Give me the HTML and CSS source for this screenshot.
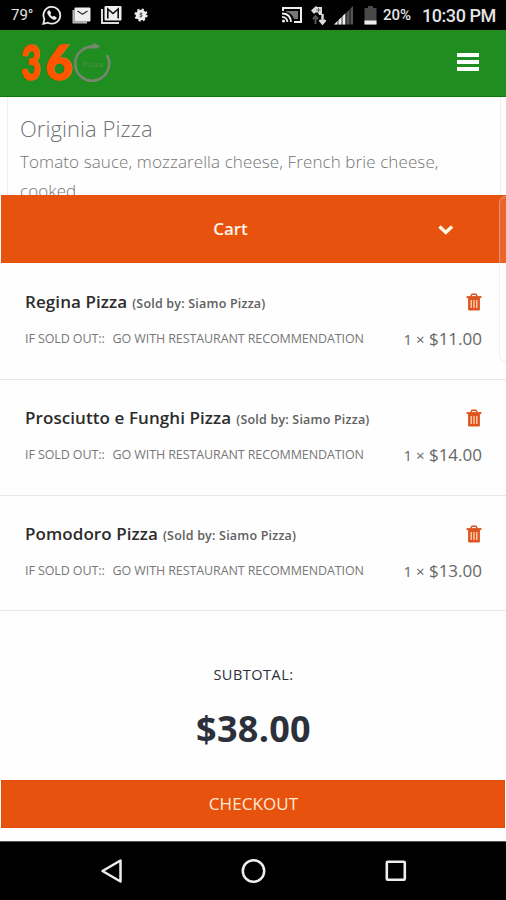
FILE: index.html
```html
<!DOCTYPE html>
<html lang="en">
<head>
<meta charset="utf-8">
<title>360 Pizza</title>
<link rel="stylesheet" href="styles.css">
</head>
<body>
<svg width="0" height="0" class="defs" aria-hidden="true">
  <symbol id="trash" viewBox="0 0 16 18">
    <path d="M4.8 3.4 6 1.2h4l1.2 2.2" fill="none" stroke="#de541c" stroke-width="1.4"/>
    <path d="M.6 3.1h14.8v2H.6z" fill="#de541c"/>
    <path d="M2.1 5h11.8v11.2q0 1.2-1.2 1.2H3.3q-1.2 0-1.2-1.2z" fill="#de541c"/>
    <path d="M5.2 7v8M8 7v8M10.8 7v8" stroke="#ffd9bd" stroke-width="1.3"/>
  </symbol>
</svg>
<div class="phone">
  <div class="status">
    <span class="temp">79°</span>
    <svg class="i-wa" width="20" height="20" viewBox="0 0 20 20"><path d="M2.4 14.1A8.4 8.4 0 1 1 6 17.7L1.3 18.8z" fill="none" stroke="#eee" stroke-width="1.8"/><path d="M5.600 6.200 7.300 5l2 3-1 1.300q.8 1.600 2.400 2.400l1.300-1 2.900 2-1.200 1.700q-1.200.8-3.200-.2Q6.600 12 5.400 8.800q-.4-1.600.2-2.600z" fill="#eee"/></svg>
    <svg class="i-mail" width="20" height="18" viewBox="0 0 20 18"><path d="M1.500 4v12.500H15" fill="none" stroke="#bbb" stroke-width="2"/><rect x="2.500" y="1.500" width="16" height="14" rx="1" fill="#eee"/><path d="m5.500 5 5 3.200 5-3.200" fill="none" stroke="#333" stroke-width="1.300"/></svg>
    <svg class="i-gmail" width="23" height="20" viewBox="0 0 23 20"><path d="M2 4v14h17" fill="none" stroke="#ddd" stroke-width="2"/><rect x="4.500" y="1" width="17" height="14.500" rx="1" fill="#eee"/><path d="M7.800 13.500V4l5.200 4.500L18.200 4v9.500" fill="none" stroke="#111" stroke-width="1.600"/></svg>
    <svg class="i-badge" width="14" height="14" viewBox="0 0 14 14"><circle cx="7" cy="7" r="5.300" fill="#eee"/><circle cx="7" cy="7" r="5.600" fill="none" stroke="#eee" stroke-width="2" stroke-dasharray="2.200"/><path d="M8.400 5.500H6.700q-.9 0-.9.750t.9.750h.6q.9 0 .9.750t-.9.750H5.600M7 4.300v5.400" fill="none" stroke="#444" stroke-width=".8"/></svg>
    <svg class="i-cast" width="22" height="18" viewBox="0 0 22 18"><path d="M2 5V2h18v14h-7" fill="none" stroke="#eee" stroke-width="2"/><path d="M5 5h12v8h-4Q11 7 5 6z" fill="#777"/><path d="M1 7.500q8.500 0 9 8.500M1 10.800q5 .3 5.500 5.200" fill="none" stroke="#eee" stroke-width="1.800"/><circle cx="2.500" cy="15" r="1.500" fill="#eee"/></svg>
    <svg class="i-data" width="17" height="20" viewBox="0 0 17 20"><path d="m1 5.500 5.500-5V2H12v8H9l-1-2.500H5.500L4 9z" fill="#ddd"/><path d="M8.500 3v4M6 5h4.500" stroke="#666" stroke-width="1"/><path d="M5.500 19v-7M3 14l2.500-3L8 14" fill="none" stroke="#555" stroke-width="2"/><path d="M12.500 9v8M9.500 15l3 3.500 3-3.500" fill="none" stroke="#ddd" stroke-width="2.400"/></svg>
    <svg class="i-signal" width="20" height="19" viewBox="0 0 20 19"><path d="M0 18.500 19 0v18.500z" fill="#555"/><path d="M0 18.500 11.500 7.300v11.200z" fill="#eee"/><path d="M4 10v9M8 6v13M12 3v16M16 1v18" stroke="#000" stroke-width=".8"/></svg>
    <svg class="i-bat" width="13" height="19" viewBox="0 0 13 19"><path d="M.500 2H4V0h5v2h3.500v16.500H.500z" fill="#484848"/><path d="M.500 14.500h12v4H.500z" fill="#eee"/></svg>
    <span class="pct">20%</span>
    <span class="time">10:30 PM</span>
  </div>
  <header class="header">
    <svg class="logo" width="94" height="48" viewBox="0 0 94 48">
      <text class="logo-num" x="1" y="38" textLength="20" lengthAdjust="spacingAndGlyphs">3</text>
      <text class="logo-num" x="25.500" y="38" textLength="27" lengthAdjust="spacingAndGlyphs">6</text>
      <path d="M86.800 13A17 17 0 1 1 77 5.400" fill="none" stroke="#76866f" stroke-width="2.600"/>
      <path d="m70 3.600 5-2.400 5.200 3-3.400 2.400-6.500-.4z" fill="#76866f"/>
      <text class="logo-tag" x="63" y="25" textLength="20">Pizza</text>
    </svg>
    <div class="burger"><i></i><i></i><i></i></div>
  </header>
  <section class="product">
    <h2>Originia Pizza</h2>
    <p>Tomato sauce, mozzarella cheese, French brie cheese, cooked</p>
  </section>
  <div class="cartbar">
    <span>Cart</span>
    <svg class="chev" width="18" height="12" viewBox="0 0 18 12"><path d="m2.500 2.500 6.300 6 6.300-6" fill="none" stroke="#fff5e8" stroke-width="3.400"/></svg>
    <div class="edge"></div>
  </div>
  <ul class="items">
    <li>
      <div class="row"><div><b>Regina Pizza</b><small>(Sold by: Siamo Pizza)</small></div><svg width="16" height="18"><use href="#trash"/></svg></div>
      <div class="row note"><span><span class="q">IF SOLD OUT::</span>GO WITH RESTAURANT RECOMMENDATION</span><span class="price"><em>1 ×</em> $11.00</span></div>
    </li>
    <li>
      <div class="row"><div><b>Prosciutto e Funghi Pizza</b><small>(Sold by: Siamo Pizza)</small></div><svg width="16" height="18"><use href="#trash"/></svg></div>
      <div class="row note"><span><span class="q">IF SOLD OUT::</span>GO WITH RESTAURANT RECOMMENDATION</span><span class="price"><em>1 ×</em> $14.00</span></div>
    </li>
    <li>
      <div class="row"><div><b>Pomodoro Pizza</b><small>(Sold by: Siamo Pizza)</small></div><svg width="16" height="18"><use href="#trash"/></svg></div>
      <div class="row note"><span><span class="q">IF SOLD OUT::</span>GO WITH RESTAURANT RECOMMENDATION</span><span class="price"><em>1 ×</em> $13.00</span></div>
    </li>
  </ul>
  <div class="total">
    <div class="label">SUBTOTAL:</div>
    <div class="sum">$38.00</div>
  </div>
  <div class="checkout">CHECKOUT</div>
  <nav class="nav">
    <svg width="24" height="26" viewBox="0 0 24 26"><path d="M20.500 2.500v21L2.500 13z" fill="none" stroke="#eee" stroke-width="2.500" stroke-linejoin="round"/></svg>
    <svg width="26" height="26" viewBox="0 0 26 26"><circle cx="12.500" cy="13" r="10.700" fill="none" stroke="#eee" stroke-width="2.500"/></svg>
    <svg width="24" height="24" viewBox="0 0 24 24"><rect x="2.800" y="2.800" width="18" height="18" rx="1" fill="none" stroke="#eee" stroke-width="2.600"/></svg>
  </nav>
</div>
</body>
</html>
```
FILE: styles.css
```css
* { box-sizing: border-box; }
body { margin: 0; background: #fff; font-family: "Open Sans", sans-serif; }
h2, p, ul { margin: 0; padding: 0; }
.defs { display: block; }
.phone { width: 506px; height: 900px; display: flex; flex-direction: column; overflow: hidden; background: #fefefe; }
.status { height: 30px; flex: none; background: #000; color: #e4e4e4; display: flex; align-items: center; padding: 0 10px 0 11px; font-family: Roboto, sans-serif; }
.status svg { flex: none; }
.temp { width: 31px; font-size: 15px; }
.i-mail { margin-left: 10px; }
.i-gmail { margin-left: 8px; }
.i-badge { margin-left: 11px; }
.i-cast { margin-left: auto; }
.i-data { margin-left: 7px; }
.i-signal { margin-left: 7px; }
.i-bat { margin-left: 10px; }
.pct { width: 39px; margin-left: 6px; font-size: 15px; font-weight: 500; }
.time { width: 74px; font-size: 18px; font-weight: 500; letter-spacing: -.45px; white-space: nowrap; }
.header { height: 67px; flex: none; background: #208d21; border-bottom: 1px solid #0c7b0c; display: flex; justify-content: space-between; align-items: flex-start; padding: 8px 27px 0 20px; }
.logo { margin-top: 4px; overflow: visible; }
.logo-num { font: 900 47px Lato, sans-serif; fill: #ff5500; stroke: #ff5500; stroke-width: 1.5; }
.logo-tag { font: 7px "Open Sans", sans-serif; fill: #618a58; }
.burger { margin-top: 15px; width: 22px; display: grid; gap: 3px; }
.burger i { height: 4px; background: #fff; }
.product { height: 98px; flex: none; margin: 0 5px 0 7px; padding: 14px 0 0 12px; border: solid #eee; border-width: 0 1px; overflow: hidden; color: #747474; font-weight: 300; }
.product h2 { font-size: 22px; line-height: 35px; font-weight: 300; letter-spacing: .05px; white-space: nowrap; }
.product p { width: 430px; font-size: 17px; letter-spacing: .1px; line-height: 29px; margin-top: 1px; }
.cartbar { position: relative; height: 68px; flex: none; margin-left: 1px; background: #e8520f; color: #fff5e8; display: grid; grid-template-columns: 1fr auto 1fr; align-items: center; font-size: 17px; font-weight: 600; }
.cartbar span { grid-column: 2; margin: 0 46px 2px 0; }
.chev { justify-self: end; margin: 2px 51px 0 0; }
.edge { position: absolute; top: 1px; right: 0; width: 7px; height: 166px; border: 1px solid rgba(225, 215, 210, .4); border-right: 0; border-radius: 7px 0 0 7px; background: rgba(255, 255, 255, .12); }
.items { list-style: none; flex: none; }
.items li { height: 116px; padding: 24px 24px 0 25px; border-bottom: 1px solid #e8e8e8; }
.items li:first-child { height: 117px; padding-top: 25px; }
.items li:last-child { height: 115px; }
.row { display: flex; justify-content: space-between; align-items: center; height: 27px; white-space: nowrap; }
.row b { font-size: 17px; font-weight: 600; letter-spacing: .08px; color: #2c2c2c; margin-right: 5px; }
.row small { font-size: 12.500px; font-weight: 600; letter-spacing: .2px; color: #606060; }
.note { height: 24px; margin-top: 11px; font-size: 12.500px; letter-spacing: -.1px; color: #777; }
.q { margin-right: 8px; }
.price { font-size: 17px; letter-spacing: 0; color: #666; }
.price em { font-size: 15px; font-style: normal; }
.total { flex: 1; text-align: center; color: #2b303b; }
.label { margin-top: 53px; font-size: 14.500px; letter-spacing: .5px; line-height: 22px; padding-left: 1px; }
.sum { margin-top: 17px; font-size: 36px; font-weight: 700; letter-spacing: .3px; line-height: 52px; padding-left: 1px; }
.checkout { height: 48px; flex: none; margin: 0 1px 13px; background: #e8520f; border: 1px solid #df4e11; color: #ffe9d5; font-size: 17px; letter-spacing: .1px; line-height: 46px; text-align: center; padding-left: 1px; }
.nav { height: 59px; flex: none; background: #000; border-top: 1px solid #555; display: flex; justify-content: space-between; align-items: center; padding: 0 98px 0 100px; }
```
